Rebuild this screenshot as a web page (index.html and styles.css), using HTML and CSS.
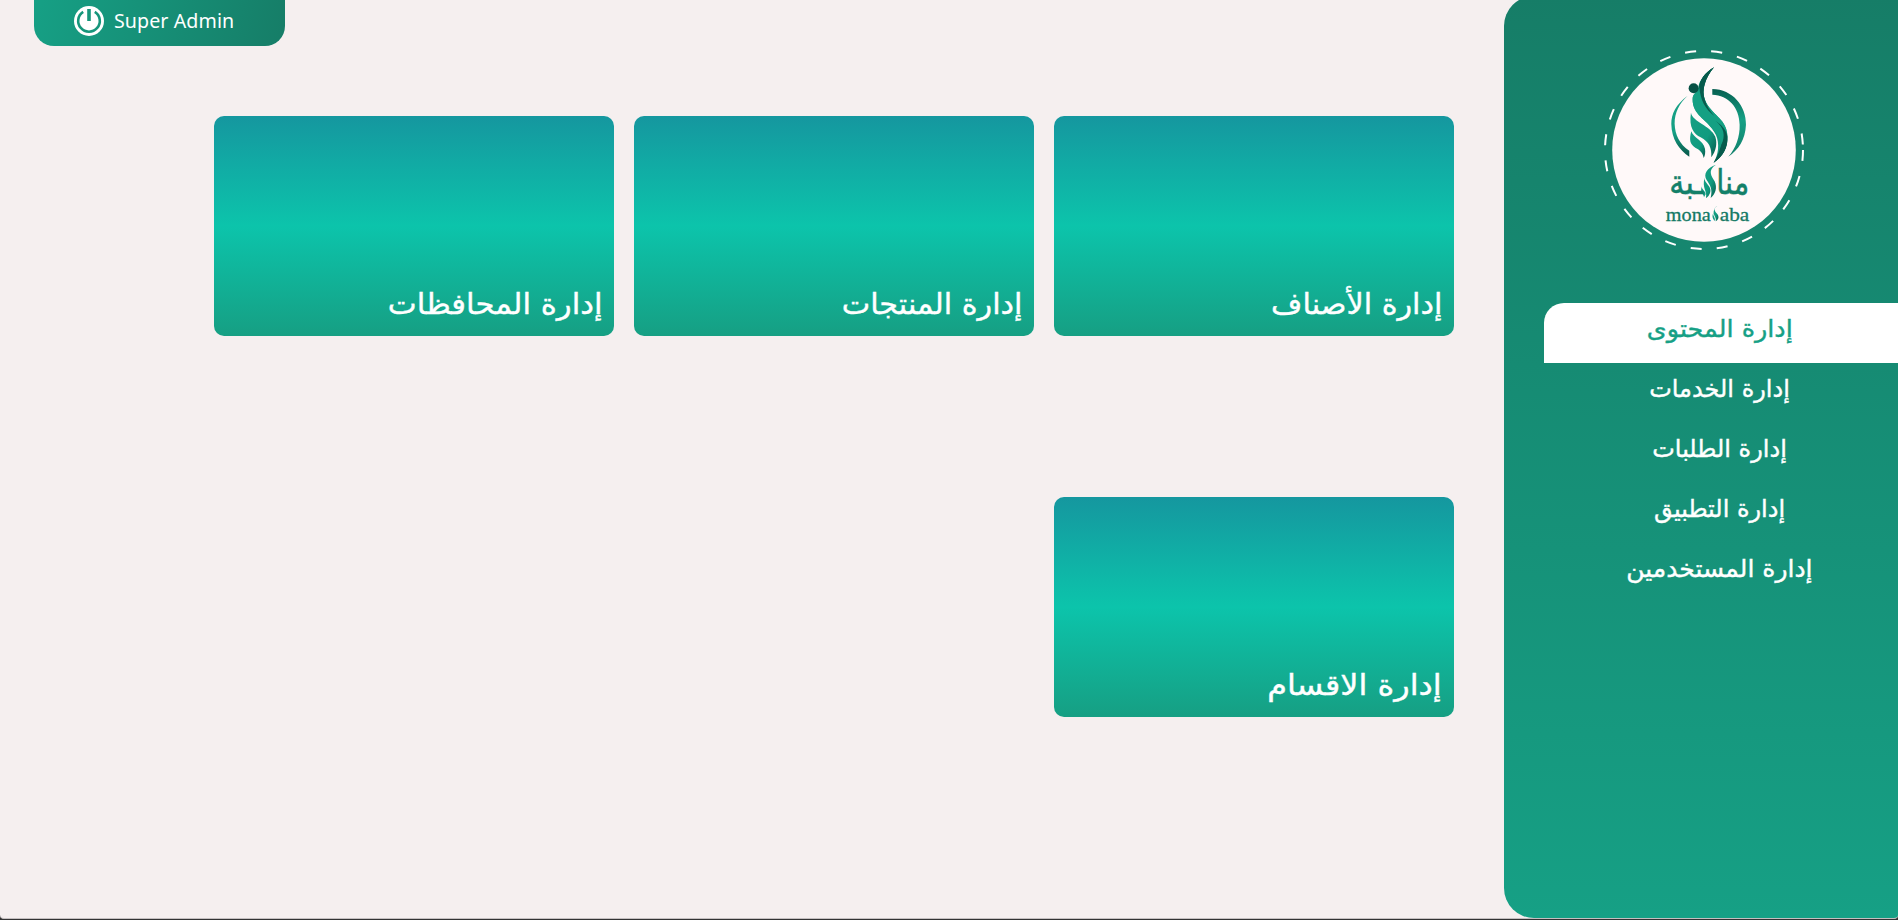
FILE: index.html
```html
<!DOCTYPE html>
<html lang="ar" dir="rtl">
<head>
<meta charset="utf-8">
<title>monasaba</title>
<link rel="stylesheet" href="styles.css">
</head>
<body>
<div class="app">
  <aside class="sidebar">
    <svg class="logo" viewBox="1603.7 50 200 200" width="200" height="200" role="img" aria-label="monasaba">
      <defs>
        <linearGradient id="leaf" x1="0" y1="0" x2="1" y2="1">
          <stop offset="0" stop-color="#16a085"/><stop offset=".6" stop-color="#119b7f"/><stop offset="1" stop-color="#07594c"/>
        </linearGradient>
        <linearGradient id="arc" x1="0" y1="0" x2="0" y2="1">
          <stop offset="0" stop-color="#075f50"/><stop offset=".45" stop-color="#16a085"/><stop offset="1" stop-color="#137f6b"/>
        </linearGradient>
        <linearGradient id="arc2" x1="0" y1="0" x2="0" y2="1">
          <stop offset="0" stop-color="#16a085"/><stop offset=".6" stop-color="#16a085"/><stop offset="1" stop-color="#075648"/>
        </linearGradient>
      </defs>
      <circle cx="1703.7" cy="150" r="99" fill="none" stroke="#fff" stroke-width="2" stroke-dasharray="11 15.28"/>
      <circle cx="1703.7" cy="150" r="91.8" fill="#fff9f9"/>
      <g transform="translate(1590 40) scale(.33333)">
        <path fill="#14997e" d="M371 82C343 98 326 124 324 142C324 155 307 160 307 177C306 226 358 242 377 285C388 311 385 343 370 368C397 350 412 323 412 292C412 239 360 221 344 180C333 149 344 114 371 82Z"/>
        <path fill="#075b4c" d="M371 82C344 98 328 121 327 141C330 174 337 199 360 224C340 193 334 163 343 134C349 114 358 98 371 82ZM363 250C384 264 399 283 395 309C391 333 381 353 370 368C395 351 414 325 408 294C403 270 382 257 363 250Z"/>
        <path fill="#14a083" d="M307 177C306 226 348 237 370 272C385 284 392 300 394 312C402 300 412 288 408 268C400 233 358 218 344 180L327 141C322 155 307 160 307 177Z"/>
        <path fill="#075b4c" d="M344 180C334 150 341 118 371 82C344 98 328 121 327 141C330 180 345 208 372 228C358 212 349 197 344 180ZM376 243C400 262 408 285 392 318C386 337 379 354 370 368C400 347 414 322 411 288C407 268 393 254 376 243Z"/>
        <circle cx="310" cy="145" r="15" fill="#075145"/>
        <path fill="url(#arc)" d="M366 147C427 148 468 198 467 254C465 298 445 329 414 350C437 324 449 290 448 254C447 202 415 166 366 164Z"/>
        <path fill="url(#arc2)" d="M292 167C257 193 243 221 243 252C244 298 266 329 297 350V332C268 313 254 284 253 251C253 217 267 190 292 167Z"/>
        <path fill="url(#leaf)" d="M302 218C307 246 361 256 375 290C382 312 376 334 363 352C365 323 356 306 331 292C311 281 295 263 302 218Z"/>
        <path fill="url(#leaf)" d="M303 274C309 294 339 301 344 326C346 337 344 347 340 354C338 336 326 329 315 323C299 313 296 300 303 274Z"/>
        <path fill="url(#leaf)" d="M377 374C351 391 363 407 373 424C382 443 375 464 361 474C368 447 359 435 349 420C338 401 351 383 377 374ZM343 413C341 429 365 438 360 456C356 469 352 471 347 474C352 453 334 444 343 413ZM335 439C333 449 346 453 346 463L341 472C341 461 327 460 335 439Z"/>
        <path fill="url(#leaf)" d="M381 498C368 505 373 513 379 520C389 531 384 540 376 544C380 532 366 525 371 511C373 502 377 500 381 498ZM369 519C367 529 377 533 373 543C368 536 364 530 369 519Z"/>
      </g>
      <text class="logo-ar" x="1749" y="193.5" textLength="33" lengthAdjust="spacingAndGlyphs">منا</text>
      <text class="logo-ar" x="1703" y="193.5" textLength="34" lengthAdjust="spacingAndGlyphs">ـبة</text>
      <text class="logo-en" direction="ltr" x="1665.5" y="220.8" textLength="45" lengthAdjust="spacingAndGlyphs">mona</text>
      <text class="logo-en" direction="ltr" x="1719.5" y="220.8" textLength="29.5" lengthAdjust="spacingAndGlyphs">aba</text>
    </svg>
    <nav class="menu">
      <a class="item active"><span class="wide">إدارة المحتوى</span></a>
      <a class="item"><span>إدارة الخدمات</span></a>
      <a class="item"><span>إدارة الطلبات</span></a>
      <a class="item"><span>إدارة التطبيق</span></a>
      <a class="item"><span class="semi-wide">إدارة المستخدمين</span></a>
    </nav>
  </aside>
  <main class="content">
    <header class="user" dir="ltr">
      <svg class="power" viewBox="0 0 30 30" width="30" height="30">
        <circle cx="15" cy="15" r="15" fill="#fff"/>
        <path d="M9.2 5.8A10.8 10.8 0 1 0 20.8 5.8" fill="none" stroke="#16967b" stroke-width="2.6"/>
        <path d="M15 3V15" stroke="#16967b" stroke-width="3.6"/>
      </svg>
      <span class="name">Super Admin</span>
    </header>
    <section class="cards">
      <a class="card"><span class="semi-wide">إدارة الأصناف</span></a>
      <a class="card"><span class="semi-wide">إدارة المنتجات</span></a>
      <a class="card"><span class="wide">إدارة المحافظات</span></a>
      <a class="card"><span class="extra-wide">إدارة الاقسام</span></a>
    </section>
  </main>
</div>
</body>
</html>
```
FILE: styles.css
```css
* { box-sizing: border-box; }
body { margin: 0; background: #333; overflow: hidden; font-family: "DejaVu Sans", sans-serif; }
.app { display: flex; height: 919px; background: #f5efef; border-bottom: 1px solid #c4bfc0; border-radius: 0 0 4px 4px; overflow: hidden; }
.sidebar { flex: none; width: 394px; height: 922px; margin-top: -4px; border-radius: 30px 0 0 30px; background: linear-gradient(#167d67, #16a085); }
.logo { display: block; margin: 54px 94.3px 53px 99.7px; }
.menu { display: flex; flex-direction: column; margin-left: 40px; }
.item { height: 60px; display: flex; justify-content: center; padding: 10px 3px 0 0; color: #fff; font-size: 24px; line-height: 32px; white-space: nowrap; }
.item.active { background: #fff; color: #16a085; border-radius: 20px 0 0 0; }
.item span, .card span { -webkit-text-stroke: .4px currentColor; }
.content { flex: 1; display: flex; flex-direction: column; }
.user { align-self: flex-end; display: flex; align-items: flex-start; gap: 10px; width: 251px; height: 46px; margin-left: 34px; padding: 6px 0 0 40px; border-radius: 0 0 20px 20px; background: linear-gradient(105deg, #16a085, #167d67); color: #fff; }
.power { flex: none; }
.name { font: 19.6px/30px "Noto Sans", sans-serif; letter-spacing: .1px; white-space: nowrap; }
.cards { display: grid; grid-template-columns: repeat(3, 400px); column-gap: 20px; row-gap: 161px; margin: 70px 50px 0 0; }
.card { height: 220px; border-radius: 10px; background: linear-gradient(#15979f, #0cc4ab, #169f83); color: #fff; display: flex; align-items: flex-end; padding: 0 12px 12px; font-size: 29px; line-height: 40px; white-space: nowrap; }
.card span { transform-origin: right center; }
.semi-wide { transform: scaleX(1.042); }
.wide { transform: scaleX(1.06); }
.extra-wide { transform: scaleX(1.1); }
.logo-ar { font: 34px "DejaVu Sans", sans-serif; fill: #138069; stroke: #138069; stroke-width: .5px; }
.logo-en { font: 19px "Liberation Serif", serif; fill: #137965; stroke: #137965; stroke-width: .3px; }
```
